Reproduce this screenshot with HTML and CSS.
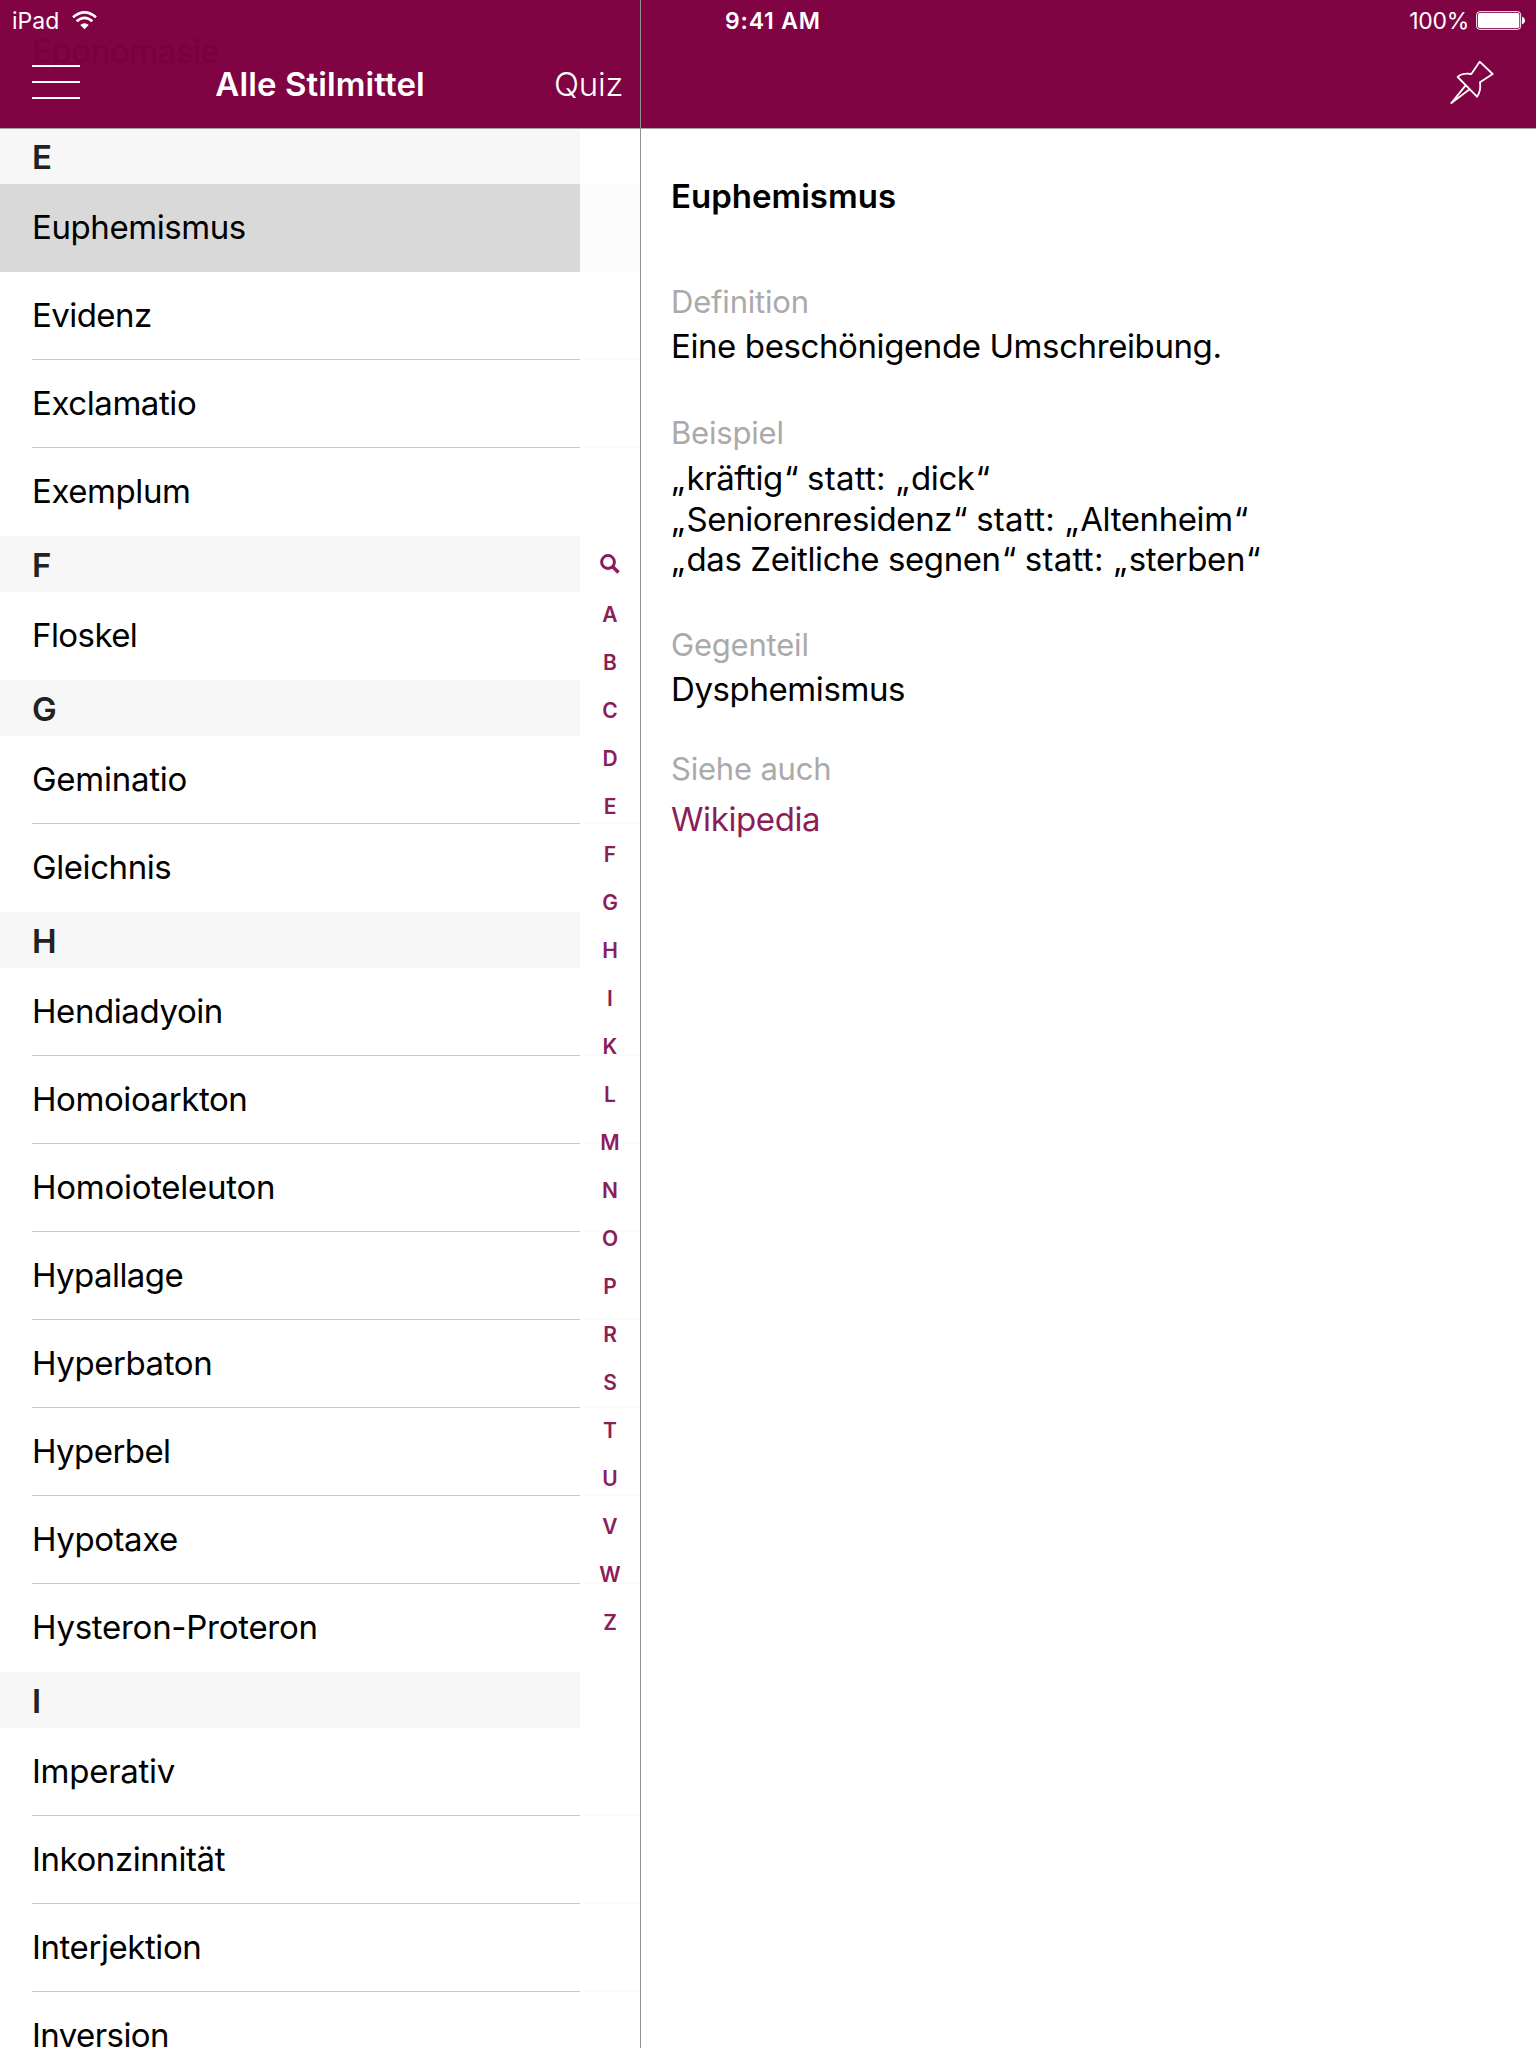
FILE: index.html
```
<!DOCTYPE html>
<html lang="de">
<head>
<meta charset="utf-8">
<title>Alle Stilmittel</title>
<link rel="stylesheet" href="styles.css">
</head>
<body>
<div class="app">
  <section class="master">
    <header class="bar">
      <span class="ghost">Eponomasie</span>
      <div class="status">
        <span class="device">iPad</span>
        <svg class="wifi" viewBox="216 30 76 60"><g fill="none" stroke="#fff" stroke-width="8"><path d="M219 52Q254 22 289 52"/><path d="M230 64Q254 43 278 64"/></g><path d="M241 75Q254 65 267 75L254 88Z" fill="#fff"/></svg>
      </div>
      <div class="nav">
        <svg class="menu" viewBox="0 0 48 36"><path d="M0 2h48M0 18h48M0 34h48" stroke="#fff" stroke-width="2"/></svg>
        <h1 class="nav-title">Alle Stilmittel</h1>
        <span class="quiz">Quiz</span>
      </div>
    </header>
    <div class="list">
      <h2 class="letter">E</h2>
      <ul class="rows"><li class="row selected">Euphemismus</li><li class="row tight">Evidenz</li><li class="row">Exclamatio</li><li class="row">Exemplum</li></ul>
      <h2 class="letter">F</h2>
      <ul class="rows"><li class="row tight">Floskel</li></ul>
      <h2 class="letter">G</h2>
      <ul class="rows"><li class="row wide">Geminatio</li><li class="row">Gleichnis</li></ul>
      <h2 class="letter">H</h2>
      <ul class="rows"><li class="row">Hendiadyoin</li><li class="row">Homoioarkton</li><li class="row wide">Homoioteleuton</li><li class="row tight">Hypallage</li><li class="row">Hyperbaton</li><li class="row tight">Hyperbel</li><li class="row">Hypotaxe</li><li class="row wide">Hysteron-Proteron</li></ul>
      <h2 class="letter">I</h2>
      <ul class="rows"><li class="row wide">Imperativ</li><li class="row">Inkonzinnität</li><li class="row">Interjektion</li><li class="row tight">Inversion</li></ul>
      <nav class="index">
        <svg class="search" viewBox="0 0 20 22"><circle cx="8" cy="9" r="6.4" fill="none" stroke="#8c1d59" stroke-width="3"/><path d="M12.5 13.5L18.5 19.5" stroke="#8c1d59" stroke-width="3.6"/></svg>
        <span>A</span><span>B</span><span>C</span><span>D</span><span>E</span><span>F</span><span>G</span><span>H</span><span>I</span><span>K</span><span>L</span><span>M</span><span>N</span><span>O</span><span>P</span><span>R</span><span>S</span><span>T</span><span>U</span><span>V</span><span>W</span><span>Z</span>
      </nav>
    </div>
  </section>
  <section class="detail">
    <header class="bar">
      <div class="status">
        <span class="time">9:41 AM</span>
        <span class="percent">100%</span>
        <svg class="battery" viewBox="288 33 147 57"><rect x="290" y="35" width="132" height="53" rx="9" fill="none" stroke="#fff" stroke-width="3"/><rect x="294" y="39" width="124" height="45" rx="5" fill="#fff"/><path d="M426 50Q435 53 435 61.500T426 73Z" fill="#fff"/></svg>
      </div>
      <div class="nav nav-end">
        <svg class="pin" viewBox="204 174 144 144" fill="none" stroke="#fff" stroke-width="5.5" stroke-linejoin="round"><path d="M299 185L338 222L300 247Q304 272 291 290L233 231Q246 218 274 222Z"/><path d="M257 256L214 309L270 267"/></svg>
      </div>
    </header>
    <article class="content">
      <h2 class="term">Euphemismus</h2>
      <h3 class="label first">Definition</h3>
      <p class="text definition">Eine beschönigende Umschreibung.</p>
      <h3 class="label">Beispiel</h3>
      <p class="text examples"><span class="open">„</span>kräftig<span class="close">“</span> <span class="versus">statt: </span><span class="open">„</span>dick<span class="close">“</span><br><span class="open">„</span>Seniorenresidenz<span class="close">“</span> <span class="versus">statt: </span><span class="open">„</span>Altenheim<span class="close">“</span><br><span class="open">„</span>das Zeitliche segnen<span class="close">“</span> <span class="versus">statt: </span><span class="open">„</span>sterben<span class="close">“</span></p>
      <h3 class="label opposite">Gegenteil</h3>
      <p class="text">Dysphemismus</p>
      <h3 class="label also">Siehe auch</h3>
      <p class="text link">Wikipedia</p>
    </article>
  </section>
</div>
</body>
</html>
```
FILE: styles.css
```
* { box-sizing: border-box; margin: 0; padding: 0; }
body { font-family: Inter, "Liberation Sans", sans-serif; font-size: 33px; line-height: 40px; color: #000; background: #fff; }
.app { display: flex; width: 1536px; height: 2048px; overflow: hidden; }
.master { width: 641px; border-right: 1px solid #8e8e93; }
.detail { flex: 1; }
.bar { position: relative; height: 129px; background: #800443; border-bottom: 1px solid #a9a0a4; color: #fff; }
.status { display: flex; align-items: center; height: 40px; font-size: 23px; line-height: 40px; }
.status span { padding-top: 2px; }
.master .status { padding-left: 12px; }
.wifi { width: 25px; height: 20px; margin-left: 13px; }
.nav { position: relative; display: flex; align-items: center; height: 88px; padding: 0 17px 0 32px; }
.menu { width: 48px; height: 36px; margin-bottom: 4px; }
.nav-title { flex: 1; padding-left: 6px; text-align: center; font-size: 33px; font-weight: 600; letter-spacing: 0.1px; }
.quiz { font-weight: 300; letter-spacing: -0.3px; }
.ghost { position: absolute; left: 32px; top: 31px; color: #780040; letter-spacing: -0.4px; }
.list { position: relative; }
.letter { height: 56px; padding: 9px 32px 0; background: #f7f7f7; color: #222; font-size: 33px; font-weight: 600; line-height: 40px; }
.list .letter:first-child { height: 55px; padding-top: 8px; }
.rows { list-style: none; }
.row { display: flex; align-items: center; height: 88px; margin-left: 32px; padding-bottom: 2px; border-bottom: 1px solid #c8c7cc; letter-spacing: -0.42px; }
.row.tight { letter-spacing: -0.57px; }
.row.wide { letter-spacing: -0.27px; }
.row:last-child { border-bottom-color: transparent; }
.selected { margin-left: 0; padding-left: 32px; background: #d9d9d9; border-bottom-color: #d9d9d9; }
.index { position: absolute; top: 0; right: 0; bottom: 0; width: 60px; padding-top: 411px; background: rgba(255, 255, 255, 0.9); display: flex; flex-direction: column; align-items: center; color: #8c1d59; font-size: 21px; font-weight: 600; line-height: 48px; }
.search { flex: none; width: 20px; height: 22px; margin: 13px 0 16px; }
.time { margin-left: 84px; font-weight: 600; letter-spacing: 0.8px; }
.percent { margin-left: auto; letter-spacing: -0.3px; }
.battery { width: 49px; height: 19px; margin: 0 11px 0 7px; }
.nav-end { justify-content: flex-end; padding-right: 40px; }
.pin { width: 48px; height: 48px; margin-bottom: 4px; }
.content { padding: 47px 31px 0 30px; }
.term { font-size: 33px; font-weight: 600; line-height: 40px; }
.label { margin-top: 47px; font-size: 31px; font-weight: 400; line-height: 40px; letter-spacing: -0.2px; color: #aaa; }
.label.first { margin-top: 66px; }
.label.opposite { margin-top: 45px; }
.label.also { margin-top: 40px; }
.text { margin-top: 4px; letter-spacing: -0.4px; }
.examples { margin-top: 5px; line-height: 40.6px; }
.open { letter-spacing: 1.6px; }
.close { margin-left: 1px; }
.versus { letter-spacing: 0.3px; }
.link { margin-top: 10px; color: #8c1d59; }
```
